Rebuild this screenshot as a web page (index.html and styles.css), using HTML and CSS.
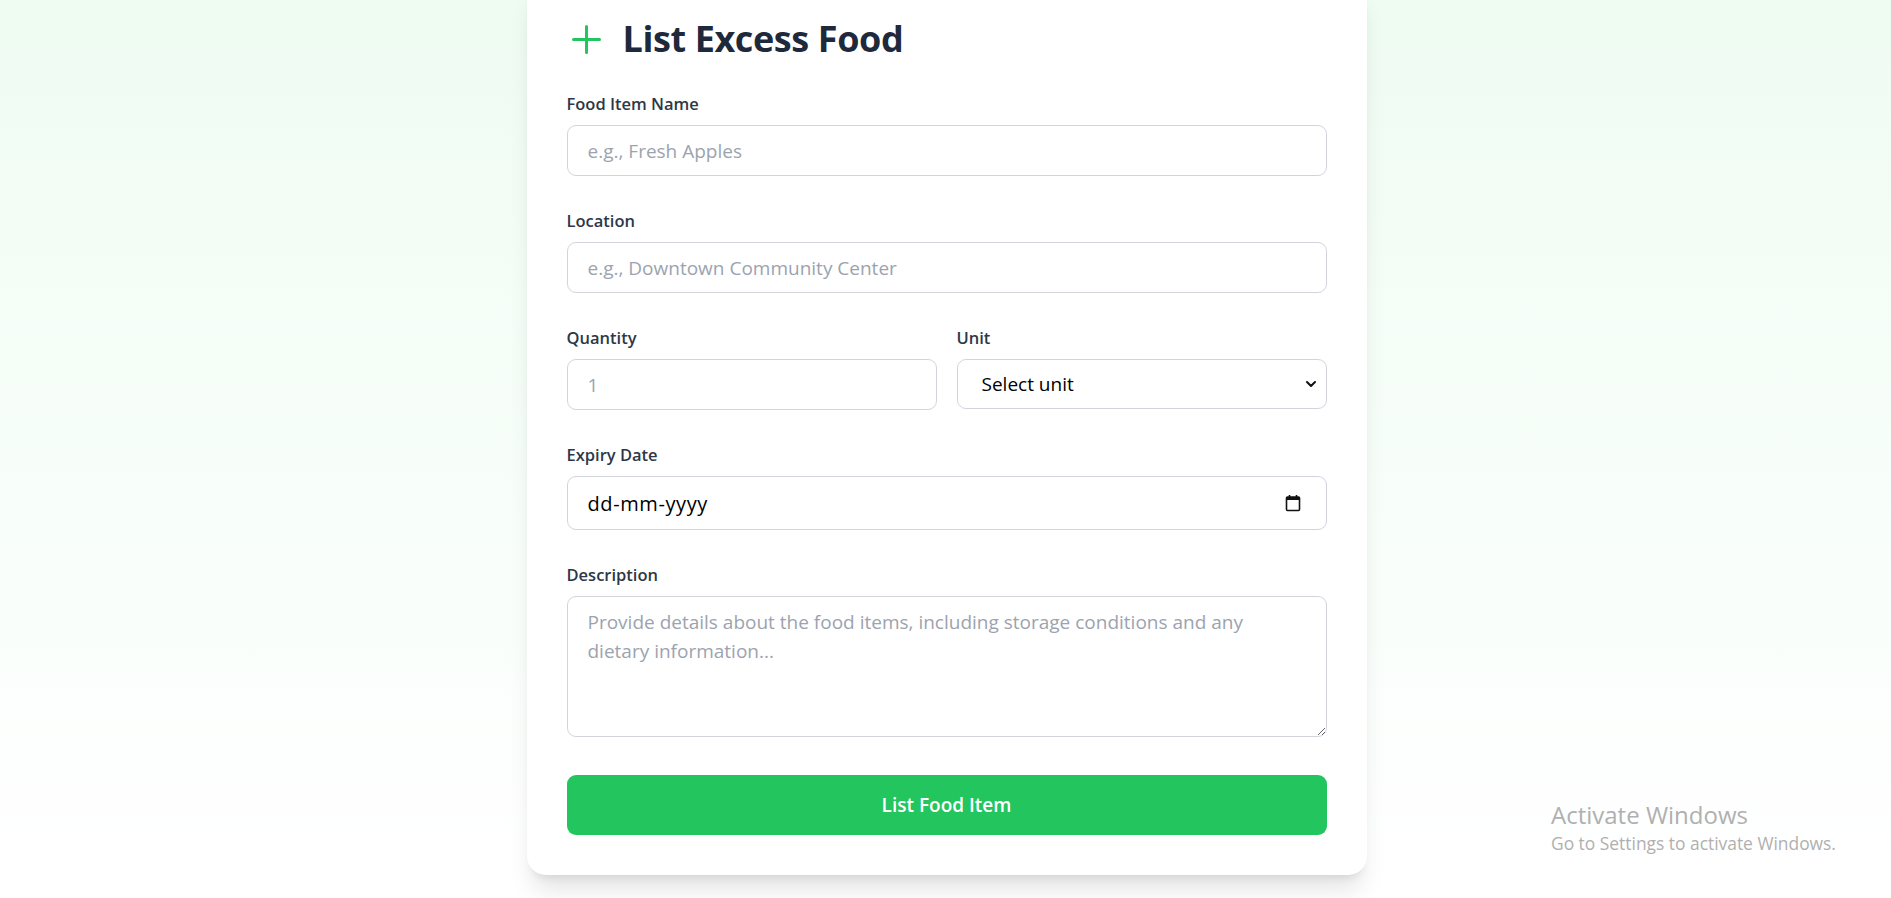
FILE: index.html
```html
<!DOCTYPE html>
<html lang="en">
<head>
<meta charset="utf-8">
<title>List Excess Food</title>
<link rel="stylesheet" href="styles.css">
</head>
<body>
<main class="page">
  <section class="card">
    <header class="card-header">
      <svg class="plus-icon" width="33" height="33" viewBox="0 0 33 33" aria-hidden="true">
        <path d="M16.5 3.5v26M3.5 16.5h26" fill="none" stroke="#22c55e" stroke-width="3" stroke-linecap="round"/>
      </svg>
      <h1 class="title">List Excess Food</h1>
    </header>
    <form class="form">
      <div class="field">
        <label class="label" for="name">Food Item Name</label>
        <input class="control" id="name" type="text" placeholder="e.g., Fresh Apples">
      </div>
      <div class="field">
        <label class="label" for="loc">Location</label>
        <input class="control" id="loc" type="text" placeholder="e.g., Downtown Community Center">
      </div>
      <div class="field row">
        <div class="col">
          <label class="label" for="qty">Quantity</label>
          <input class="control" id="qty" type="number" placeholder="1">
        </div>
        <div class="col">
          <label class="label" for="unit">Unit</label>
          <div class="select-wrap">
            <select class="control select" id="unit">
              <option>Select unit</option>
            </select>
            <svg class="chevron" width="12" height="8" viewBox="0 0 12 8" aria-hidden="true">
              <path d="M2 2l4 4 4-4" fill="none" stroke="#111" stroke-width="2" stroke-linecap="round" stroke-linejoin="round"/>
            </svg>
          </div>
        </div>
      </div>
      <div class="field">
        <label class="label">Expiry Date</label>
        <div class="control date">
          <span class="date-text">dd-mm-yyyy</span>
          <svg class="cal" width="16" height="18" viewBox="0 0 16 18" aria-hidden="true">
            <rect x="1.5" y="3" width="13" height="13.5" rx="1" fill="none" stroke="#111" stroke-width="1.6"/>
            <rect x="1.5" y="3" width="13" height="3" fill="#111"/>
            <path d="M4.5 1v3M11.5 1v3" stroke="#111" stroke-width="1.6"/>
          </svg>
        </div>
      </div>
      <div class="field">
        <label class="label" for="desc">Description</label>
        <textarea class="control textarea" id="desc" placeholder="Provide details about the food items, including storage conditions and any dietary information..."></textarea>
      </div>
      <button class="submit" type="button">List Food Item</button>
    </form>
  </section>
</main>
<div class="watermark">
  <div class="wm-title">Activate Windows</div>
  <div class="wm-sub">Go to Settings to activate Windows.</div>
</div>
</body>
</html>
```
FILE: styles.css
```css
* { box-sizing: border-box; }
html, body { margin: 0; height: 100%; }
body {
  font-family: "Open Sans", "Noto Sans", Arial, sans-serif;
  background: linear-gradient(to bottom, #effcf2 0%, #f7fef9 50%, #ffffff 100%);
  overflow: hidden;
  color: #1f2937;
}
.page {
  display: flex;
  justify-content: center;
}
.card {
  width: 840px;
  margin-top: -21px;
  margin-left: 2px;
  padding: 40px;
  background: #fff;
  border-radius: 19px;
  box-shadow: 0 20px 25px -5px rgba(0,0,0,0.10), 0 8px 10px -6px rgba(0,0,0,0.10);
}
.card-header {
  height: 40px;
  display: flex;
  align-items: center;
  gap: 20px;
  margin-bottom: 33px;
}
.plus-icon { margin-left: 3px; flex: none; }
.title {
  margin: 0;
  font-size: 36px;
  font-weight: 700;
  line-height: 40px;
  color: #1e293b;
  letter-spacing: -0.4px;
}
.form { display: flex; flex-direction: column; }
.field { margin-bottom: 33px; display: flex; flex-direction: column; }
.row { flex-direction: row; gap: 20px; }
.col { flex: 1; display: flex; flex-direction: column; }
.label {
  font-size: 16.5px;
  font-weight: 600;
  line-height: 24px;
  margin-bottom: 9px;
  color: #2d3748;
}
.control {
  width: 100%;
  height: 51px;
  border: 1px solid #d1d5db;
  border-radius: 9px;
  padding: 0 20px;
  font-family: inherit;
  font-size: 19px;
  color: #111;
  background: #fff;
  outline: none;
}
.control::placeholder { color: #9ca3af; }
input[type=number]::-webkit-inner-spin-button,
input[type=number]::-webkit-outer-spin-button { -webkit-appearance: none; margin: 0; }
.select-wrap { position: relative; }
.select {
  -webkit-appearance: none;
  appearance: none;
  height: 50px;
  padding-left: 24px;
  color: #000;
}
.chevron { position: absolute; right: 10px; top: 21px; pointer-events: none; }
.date {
  height: 54px;
  display: flex;
  align-items: center;
  justify-content: space-between;
  padding: 0 25px 0 20px;
}
.date-text { font-size: 20px; letter-spacing: 0.6px; color: #000; }
.cal { display: block; }
.textarea {
  height: 141px;
  padding: 11px 20px;
  line-height: 29px;
  resize: vertical;
}
.submit {
  margin-top: 5px;
  height: 60px;
  border: none;
  border-radius: 9px;
  background: #22c55e;
  color: #fff;
  font-family: inherit;
  font-size: 19px;
  font-weight: 600;
}
.watermark {
  position: absolute;
  left: 1551px;
  top: 800px;
  color: #b0b0b0;
  font-family: "Open Sans", sans-serif;
}
.wm-title { font-size: 24px; line-height: 30px; font-weight: 400; }
.wm-sub { font-size: 17.4px; line-height: 26px; }
```
